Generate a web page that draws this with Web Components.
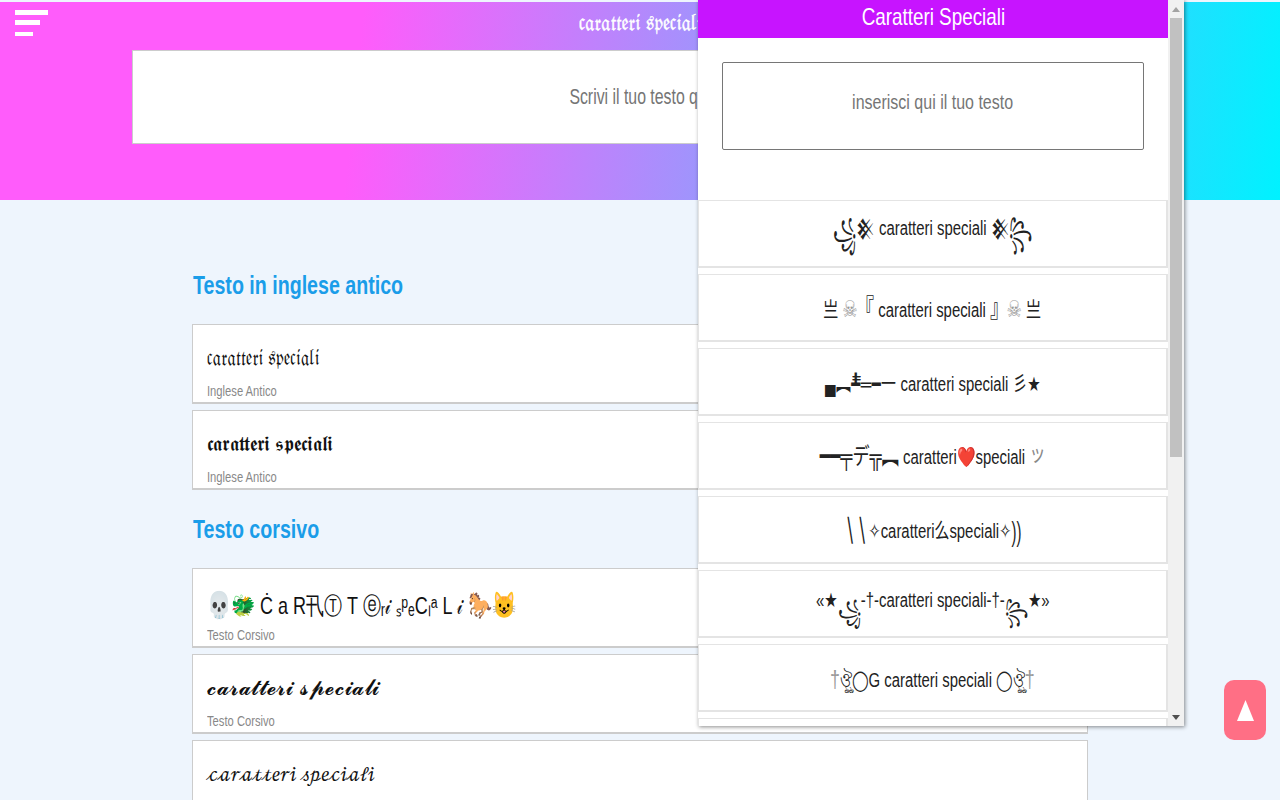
<!DOCTYPE html>
<html lang="it">
<head>
<meta charset="utf-8">
<title>Caratteri Speciali</title>
<style>
  html, body { margin: 0; height: 800px; overflow: hidden; }
  body { background: #eef5fd; font-family: "Liberation Sans", Arial, sans-serif; }
</style>
</head>
<body>
<site-page>
  <site-header title-text="𝔠𝔞𝔯𝔞𝔱𝔱𝔢𝔯𝔦 𝔰𝔭𝔢𝔠𝔦𝔞𝔩𝔦" placeholder="Scrivi il tuo testo qui"></site-header>
  <main-list>
    <section-title>Testo in inglese antico</section-title>
    <style-card label="Inglese Antico" face="Noto Sans Math" size="21" sx=".9" drop="1">𝔠𝔞𝔯𝔞𝔱𝔱𝔢𝔯𝔦 𝔰𝔭𝔢𝔠𝔦𝔞𝔩𝔦</style-card>
    <style-card label="Inglese Antico" size="21" sx=".905">𝖈𝖆𝖗𝖆𝖙𝖙𝖊𝖗𝖎 𝖘𝖕𝖊𝖈𝖎𝖆𝖑𝖎</style-card>
    <section-title class="next">Testo corsivo</section-title>
    <style-card label="Testo Corsivo" face="Liberation Sans" size="24" sx=".75" drop="3"><row-glyph size="26">💀🐲</row-glyph> Ċ a R卂Ⓣ T ⓔᵣ𝒾 ₛᵖₑCₗᵃ L 𝒾 <row-glyph size="26">🐎😺</row-glyph></style-card>
    <style-card label="Testo Corsivo" face="Latin Modern Math" size="22" sx=".96">𝓬𝓪𝓻𝓪𝓽𝓽𝓮𝓻𝓲 𝓼𝓹𝓮𝓬𝓲𝓪𝓵𝓲</style-card>
    <style-card label="Testo Corsivo" face="STIX Two Math" size="21" sx=".895" drop="2">𝒸𝒶𝓇𝒶𝓉𝓉𝑒𝓇𝒾 𝓈𝓅𝑒𝒸𝒾𝒶𝓁𝒾</style-card>
  </main-list>
  <popup-panel>
    <popup-row drop="-1.5"><row-glyph sy="1.53" dy="8">꧁</row-glyph><row-glyph size="20">𒆜</row-glyph> caratteri speciali <row-glyph size="20">𒆜</row-glyph><row-glyph sy="1.53" dy="8">꧂</row-glyph></popup-row>
    <popup-row drop="2">亗 <row-glyph size="23" tint="#9a9a9a">☠</row-glyph><row-glyph size="25" ml="-3">『</row-glyph> caratteri speciali <row-glyph size="25" mr="-3">』</row-glyph><row-glyph size="23" tint="#9a9a9a">☠</row-glyph> 亗</popup-row>
    <popup-row drop="5"><row-glyph ls=".6">▄︻┻̿̿═━一</row-glyph> caratteri speciali 彡★</popup-row>
    <popup-row drop="2"><row-glyph size="23">━━╤デ╦︻</row-glyph> caratteri<row-glyph size="20">❤️</row-glyph>speciali <row-glyph size="22" tint="#888" dy="-3">ッ</row-glyph></popup-row>
    <popup-row drop="4"><row-glyph sy="1.5" size="22" ls="2">∖∖</row-glyph>✧caratteri么speciali✧<row-glyph sy="1.4">))</row-glyph></popup-row>
    <popup-row drop="5">«★<row-glyph sy="1.2" dy="13">꧁</row-glyph>-†-caratteri speciali-†-<row-glyph sy="1.2" dy="13">꧂</row-glyph>★»</popup-row>
    <popup-row drop="8"><row-glyph size="24" tint="#999">†</row-glyph>ঔৣ◯G caratteri speciali ◯ঔৣ<row-glyph size="24" tint="#999">†</row-glyph></popup-row>
    <popup-row></popup-row>
  </popup-panel>
  <top-button></top-button>
</site-page>

<script>
class SitePage extends HTMLElement {
  constructor() {
    super();
    this.attachShadow({ mode: 'open' });
    this.shadowRoot.innerHTML = `
      <style>
        :host { display: block; position: relative; height: 800px; overflow: hidden; }
      </style>
      <slot></slot>
    `;
  }
}

class SiteHeader extends HTMLElement {
  constructor() {
    super();
    this.attachShadow({ mode: 'open' });
    this.shadowRoot.innerHTML = `
      <style>
        :host {
          display: block;
          height: 198px;
          margin-top: 2px;
          background: linear-gradient(96deg, #ff5cfb 28%, #00f2ff 100%);
          position: relative;
        }
        .burger { position: absolute; left: 15px; top: 8px; width: 33px; }
        .burger i { display: block; height: 5px; background: #fff; margin-bottom: 5px; }
        .burger i:nth-child(2) { width: 25px; margin-bottom: 7px; }
        .burger i:nth-child(3) { width: 18px; height: 4px; }
        .title { height: 48px; padding-bottom: 8px; box-sizing: border-box; display: flex; justify-content: center; align-items: center; color: #fff; font-size: 22px; font-family: "Noto Sans Math", serif; -webkit-text-stroke: .4px #fff; }
        .title span { display: inline-block; transform: scaleX(.94); white-space: nowrap; }
        .search {
          box-sizing: border-box;
          margin: 0 132px;
          height: 94px;
          background: #fff;
          border: 1px solid #ccc;
          display: flex;
          justify-content: center;
          align-items: center;
          color: #757575;
          font-size: 22px;
        }
        .search span { display: inline-block; transform: scaleX(.72); white-space: nowrap; }
      </style>
      <div class="burger"><i></i><i></i><i></i></div>
      <div class="title"><span>${this.getAttribute('title-text')}</span></div>
      <div class="search"><span>${this.getAttribute('placeholder')}</span></div>
    `;
  }
}

class MainList extends HTMLElement {
  constructor() {
    super();
    this.attachShadow({ mode: 'open' });
    this.shadowRoot.innerHTML = `
      <style>
        :host { display: block; margin: 0 192px; padding-top: 60px; }
      </style>
      <slot></slot>
    `;
  }
}

class SectionTitle extends HTMLElement {
  constructor() {
    super();
    this.attachShadow({ mode: 'open' });
    this.shadowRoot.innerHTML = `
      <style>
        :host { display: block; height: 39px; margin: 0 0 20px; line-height: 40px; padding-top: 5px; }
        :host(.next) { margin-top: 14px; }
        span { display: inline-block; transform: scaleX(.785); transform-origin: left; margin-left: 1px; color: #1a9de9; font-size: 25px; font-weight: bold; white-space: nowrap; }
      </style>
      <span><slot></slot></span>
    `;
  }
}

class StyleCard extends HTMLElement {
  constructor() {
    super();
    const face = this.getAttribute('face') || 'DejaVu Sans';
    const size = this.getAttribute('size') || 21;
    const sx = this.getAttribute('sx') || 1;
    const drop = Number(this.getAttribute('drop') || 0);
    this.attachShadow({ mode: 'open' });
    this.shadowRoot.innerHTML = `
      <style>
        :host {
          display: block;
          box-sizing: border-box;
          height: 80px;
          margin-bottom: 6px;
          padding: ${13 + drop}px 14px 0;
          background: #fff;
          border: 1px solid #ccc;
          border-bottom-width: 2px;
          overflow: hidden;
        }
        .text { height: ${44 - drop}px; line-height: 40px; font-size: ${size}px; color: #111; font-family: "${face}", serif; }
        .text span { display: inline-block; transform: scaleX(${sx}); transform-origin: left; white-space: nowrap; }
        .label { font-size: 14px; color: #888; line-height: 18px; }
        .label span { display: inline-block; transform: scaleX(.8); transform-origin: left; white-space: nowrap; }
      </style>
      <div class="text"><span><slot></slot></span></div>
      <div class="label"><span>${this.getAttribute('label')}</span></div>
    `;
  }
}

class PopupPanel extends HTMLElement {
  constructor() {
    super();
    this.attachShadow({ mode: 'open' });
    this.shadowRoot.innerHTML = `
      <style>
        :host {
          position: absolute;
          left: 698px;
          top: 0;
          width: 486px;
          height: 726px;
          display: flex;
          background: #fff;
          box-shadow: 1px 1px 4px rgba(0,0,0,.45);
        }
        .body { width: 470px; height: 726px; overflow: hidden; flex: none; }
        .head { height: 38px; padding-bottom: 4px; box-sizing: border-box; background: #c714ff; color: #fff; font-size: 24px; display: flex; justify-content: center; align-items: center; }
        .head span { display: inline-block; transform: scaleX(.785); white-space: nowrap; }
        .field span { display: inline-block; transform: scaleX(.8); white-space: nowrap; }
        .field {
          box-sizing: border-box;
          height: 88px;
          margin: 24px 24px 50px;
          border: 1px solid #767676;
          border-radius: 2px;
          color: #757575;
          font-size: 20px;
          display: flex;
          justify-content: center;
          align-items: center;
          padding-bottom: 8px;
        }
        .rows { display: grid; gap: 6px; }
        .bar { width: 16px; background: #f1f1f1; display: flex; flex-direction: column; align-items: center; }
        .up, .down { height: 18px; width: 16px; display: flex; align-items: center; justify-content: center; }
        .thumb { width: 12px; height: 439px; background: #c1c1c1; }
        .rest { flex: 1; }
        svg { display: block; }
      </style>
      <div class="body">
        <div class="head"><span>Caratteri Speciali</span></div>
        <div class="field"><span>inserisci qui il tuo testo</span></div>
        <div class="rows"><slot></slot></div>
      </div>
      <div class="bar">
        <div class="up"><svg width="8" height="5" viewBox="0 0 8 5"><path d="M4 0 8 5H0z" fill="#a3a3a3"/></svg></div>
        <div class="thumb"></div>
        <div class="rest"></div>
        <div class="down"><svg width="8" height="5" viewBox="0 0 8 5"><path d="M0 0H8L4 5z" fill="#505050"/></svg></div>
      </div>
    `;
  }
}

class PopupRow extends HTMLElement {
  constructor() {
    super();
    const drop = Number(this.getAttribute('drop') || 0);
    this.attachShadow({ mode: 'open' });
    this.shadowRoot.innerHTML = `
      <style>
        :host {
          display: flex;
          box-sizing: border-box;
          height: 68px;
          border: 2px solid #e4e4e4;
          border-width: 1px 2px 2px 1px;
          justify-content: center;
          align-items: center;
          padding-bottom: ${Math.max(8 - 2 * drop, 0)}px;
          padding-top: ${Math.max(2 * drop - 8, 0)}px;
          color: #222;
          font-size: 20px;
          font-family: "Liberation Sans", "DejaVu Sans", "Noto Sans CJK JP", sans-serif;
        }
        span { display: inline-block; transform: scaleX(.745); white-space: nowrap; }
      </style>
      <span><slot></slot></span>
    `;
  }
}

class RowGlyph extends HTMLElement {
  constructor() {
    super();
    const size = this.getAttribute('size') || 20;
    const sy = this.getAttribute('sy') || 1;
    const dy = this.getAttribute('dy') || 0;
    const ml = this.getAttribute('ml') || 0;
    const mr = this.getAttribute('mr') || 0;
    const ls = this.getAttribute('ls') || 0;
    const tint = this.getAttribute('tint') || 'inherit';
    this.attachShadow({ mode: 'open' });
    this.shadowRoot.innerHTML = `
      <style>
        :host {
          display: inline-block;
          font-size: ${size}px;
          color: ${tint};
          letter-spacing: ${ls}px;
          margin: 0 ${mr}px 0 ${ml}px;
          transform: translateY(${dy}px) scaleY(${sy});
        }
      </style>
      <slot></slot>
    `;
  }
}

class TopButton extends HTMLElement {
  constructor() {
    super();
    this.attachShadow({ mode: 'open' });
    this.shadowRoot.innerHTML = `
      <style>
        :host {
          position: absolute;
          left: 1224px;
          top: 680px;
          width: 42px;
          height: 60px;
          border-radius: 10px;
          background: #ff6f85;
          display: flex;
          align-items: center;
          justify-content: center;
        }
      </style>
      <svg width="17" height="21" viewBox="0 0 17 21"><path d="M8.5 0 17 21H0z" fill="#fff"/></svg>
    `;
  }
}

customElements.define('site-page', SitePage);
customElements.define('site-header', SiteHeader);
customElements.define('main-list', MainList);
customElements.define('section-title', SectionTitle);
customElements.define('style-card', StyleCard);
customElements.define('popup-panel', PopupPanel);
customElements.define('popup-row', PopupRow);
customElements.define('row-glyph', RowGlyph);
customElements.define('top-button', TopButton);
</script>
</body>
</html>
